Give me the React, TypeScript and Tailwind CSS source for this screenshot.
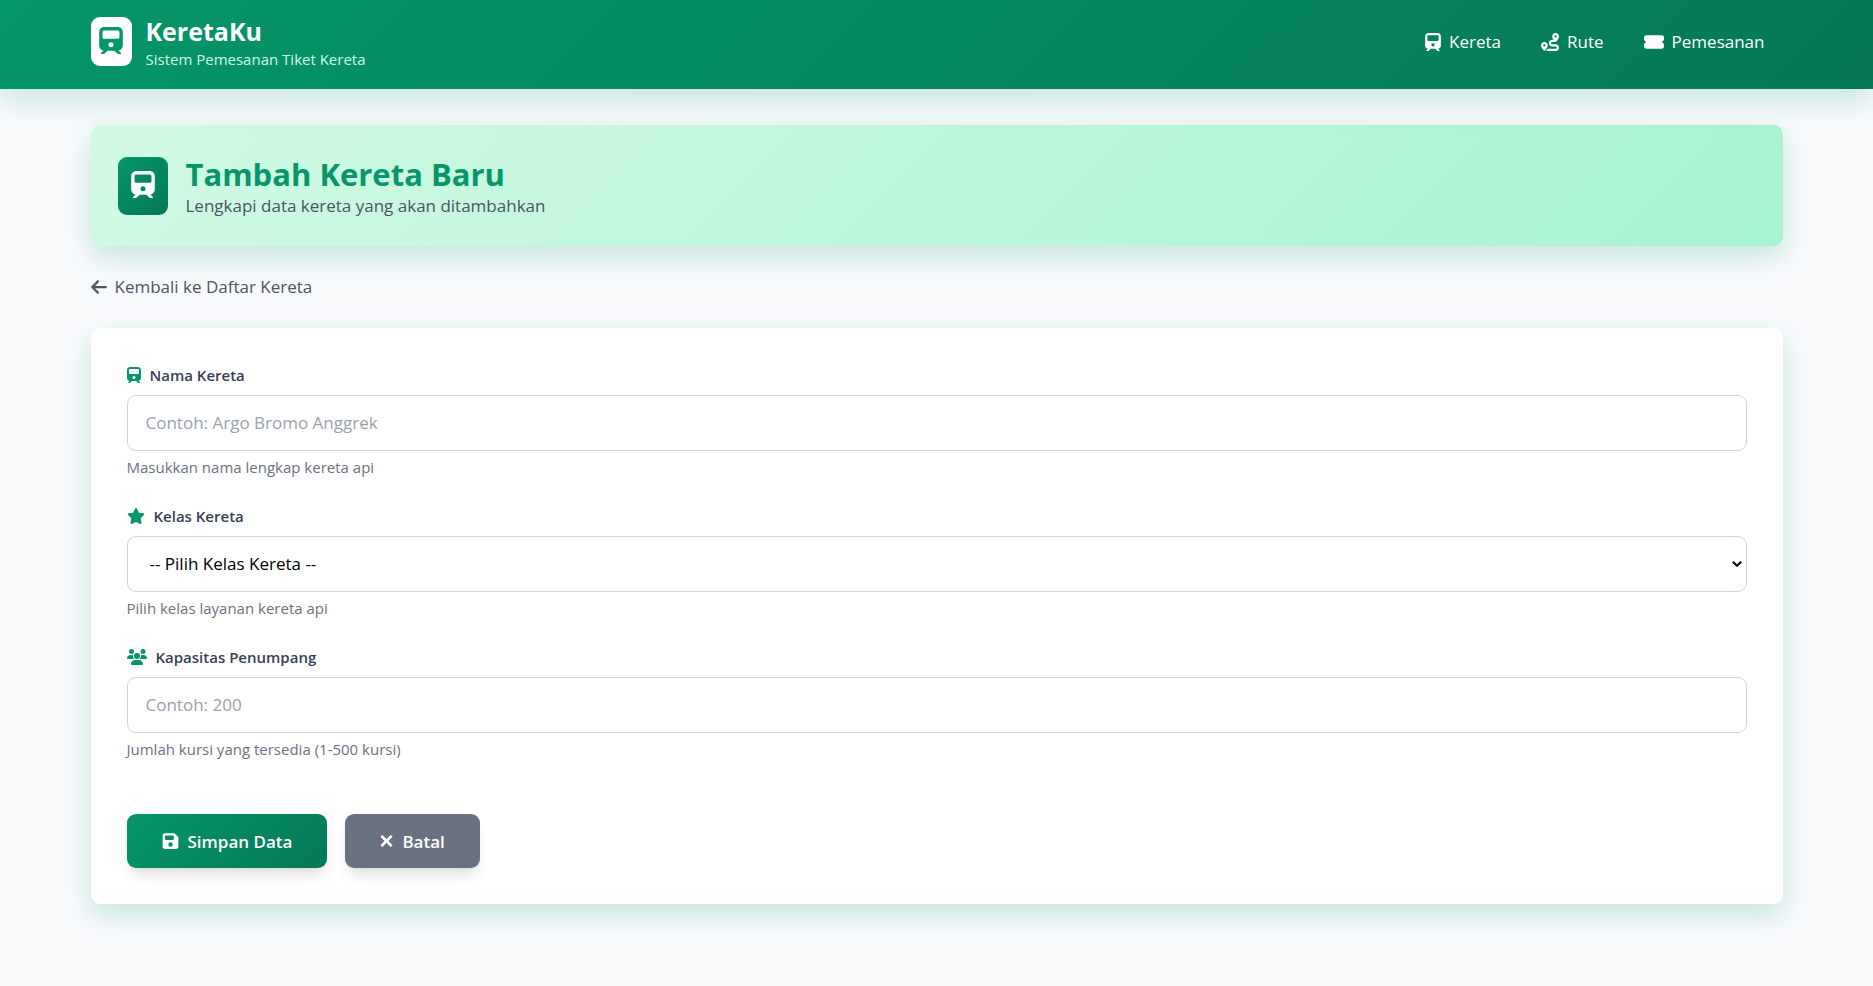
import type { ReactNode } from "react";
import {
  FaArrowLeft,
  FaFloppyDisk,
  FaRoute,
  FaStar,
  FaTicketSimple,
  FaTrain,
  FaUsers,
  FaXmark,
} from "react-icons/fa6";

const controlClass =
  "block w-full rounded-[9px] border border-gray-300 bg-white text-[17px] leading-[26px] outline-none focus:border-emerald-600";

function NavLink({ icon, children }: { icon: ReactNode; children: ReactNode }) {
  return (
    <a href="#" className="flex items-center gap-2 rounded-lg px-[18px] py-2 text-white hover:bg-white/10">
      {icon}
      {children}
    </a>
  );
}

function Field({
  id,
  icon,
  label,
  help,
  children,
}: {
  id: string;
  icon: ReactNode;
  label: string;
  help: string;
  children: ReactNode;
}) {
  return (
    <div>
      <label
        htmlFor={id}
        className="mb-[9px] flex h-[22px] items-center gap-[9px] text-[15px] font-semibold text-gray-700"
      >
        {icon}
        {label}
      </label>
      {children}
      <p id={`${id}-help`} className="mt-[5px] text-[15px] leading-[22px] text-gray-500">
        {help}
      </p>
    </div>
  );
}

export default function App() {
  return (
    <div className="min-h-screen bg-[#f8fafc] font-['Open_Sans','Noto_Sans',sans-serif] text-[17px] leading-[27px]">
      <header className="relative bg-linear-135 from-[#059669] to-[#047857] shadow-[0_11px_28px_rgba(5,150,105,0.2)]">
        <div className="mx-auto flex min-h-[89px] w-[calc(100%-48px)] max-w-[1692px] items-center justify-between pb-[6px]">
          <a href="#" className="flex items-center gap-[14px]">
            <span className="flex h-[49px] w-[41px] items-center justify-center rounded-[9px] bg-white pb-[3px] text-[#059669]">
              <FaTrain className="h-[27px] w-6" />
            </span>
            <span className="flex flex-col pt-1">
              <span className="text-[25px] leading-[30px] font-bold text-white">KeretaKu</span>
              <span className="text-[15px] leading-[26px] text-[#d1fae5]">Sistem Pemesanan Tiket Kereta</span>
            </span>
          </a>
          <nav className="flex items-center gap-1">
            <NavLink icon={<FaTrain className="h-[18px] w-4" />}>Kereta</NavLink>
            <NavLink icon={<FaRoute className="size-[18px]" />}>Rute</NavLink>
            <NavLink icon={<FaTicketSimple className="h-[18px] w-5" />}>Pemesanan</NavLink>
          </nav>
        </div>
      </header>

      <main className="mx-auto w-[calc(100%-48px)] max-w-[1692px] pt-9 pb-9">
        <section className="flex min-h-[121px] items-center gap-[18px] rounded-[9px] bg-linear-135 from-[#d1fae5] to-[#a7f3d0] px-[27px] shadow-[0_11px_28px_rgba(5,150,105,0.2)]">
          <div className="flex h-[58px] w-[50px] items-center justify-center rounded-[9px] bg-linear-135 from-[#059669] to-[#047857] pb-[3px] text-white">
            <FaTrain className="h-[27px] w-6" />
          </div>
          <div className="pt-1">
            <h1 className="text-[31px] leading-9 font-bold text-[#059669]">Tambah Kereta Baru</h1>
            <p className="text-gray-600">Lengkapi data kereta yang akan ditambahkan</p>
          </div>
        </section>

        <a href="#" className="mt-[27px] flex w-fit items-center gap-2 text-gray-600 hover:text-[#059669]">
          <FaArrowLeft className="h-[18px] w-4" />
          Kembali ke Daftar Kereta
        </a>

        <form
          className="mt-7 flex flex-col gap-[27px] rounded-[9px] bg-white p-9 shadow-[0_11px_28px_rgba(5,150,105,0.2)]"
          onSubmit={(event) => event.preventDefault()}
        >
          <Field
            id="nama"
            label="Nama Kereta"
            help="Masukkan nama lengkap kereta api"
            icon={<FaTrain className="h-4 w-[14px] text-[#059669]" />}
          >
            <input
              id="nama"
              type="text"
              aria-describedby="nama-help"
              placeholder="Contoh: Argo Bromo Anggrek"
              className={`${controlClass} px-[18px] py-[14px] text-gray-700 placeholder:text-gray-400`}
            />
          </Field>

          <Field
            id="kelas"
            label="Kelas Kereta"
            help="Pilih kelas layanan kereta api"
            icon={<FaStar className="h-4 w-[18px] text-[#059669]" />}
          >
            <div className="relative">
              <select
                id="kelas"
                aria-describedby="kelas-help"
                defaultValue=""
                className={`${controlClass} appearance-none px-[22px] py-[14px] text-black`}
              >
                <option value="">-- Pilih Kelas Kereta --</option>
                <option value="ekonomi">Ekonomi</option>
                <option value="bisnis">Bisnis</option>
                <option value="eksekutif">Eksekutif</option>
              </select>
              <svg
                viewBox="0 0 10 6"
                aria-hidden="true"
                className="pointer-events-none absolute inset-y-0 right-[5px] my-auto h-[6px] w-[10px]"
              >
                <path d="M0.8 0.8 5 4.8 9.2 0.8" fill="none" stroke="black" strokeWidth="2" />
              </svg>
            </div>
          </Field>

          <Field
            id="kapasitas"
            label="Kapasitas Penumpang"
            help="Jumlah kursi yang tersedia (1-500 kursi)"
            icon={<FaUsers className="h-4 w-5 text-[#059669]" />}
          >
            <input
              id="kapasitas"
              type="number"
              min={1}
              max={500}
              aria-describedby="kapasitas-help"
              placeholder="Contoh: 200"
              className={`${controlClass} px-[18px] py-[14px] text-gray-700 placeholder:text-gray-400`}
            />
          </Field>

          <div className="flex gap-[18px] pt-[27px]">
            <button
              type="submit"
              className="flex h-[54px] items-center gap-[9px] rounded-[9px] bg-linear-135 from-[#059669] to-[#047857] px-[35px] font-semibold text-white shadow-lg"
            >
              <FaFloppyDisk className="h-[18px] w-[17px]" />
              Simpan Data
            </button>
            <button
              type="button"
              className="flex h-[54px] items-center gap-[9px] rounded-[9px] bg-gray-500 px-[35px] font-semibold text-white shadow-lg"
            >
              <FaXmark className="h-[18px] w-[13px]" stroke="currentColor" strokeWidth={24} />
              Batal
            </button>
          </div>
        </form>
      </main>
    </div>
  );
}
